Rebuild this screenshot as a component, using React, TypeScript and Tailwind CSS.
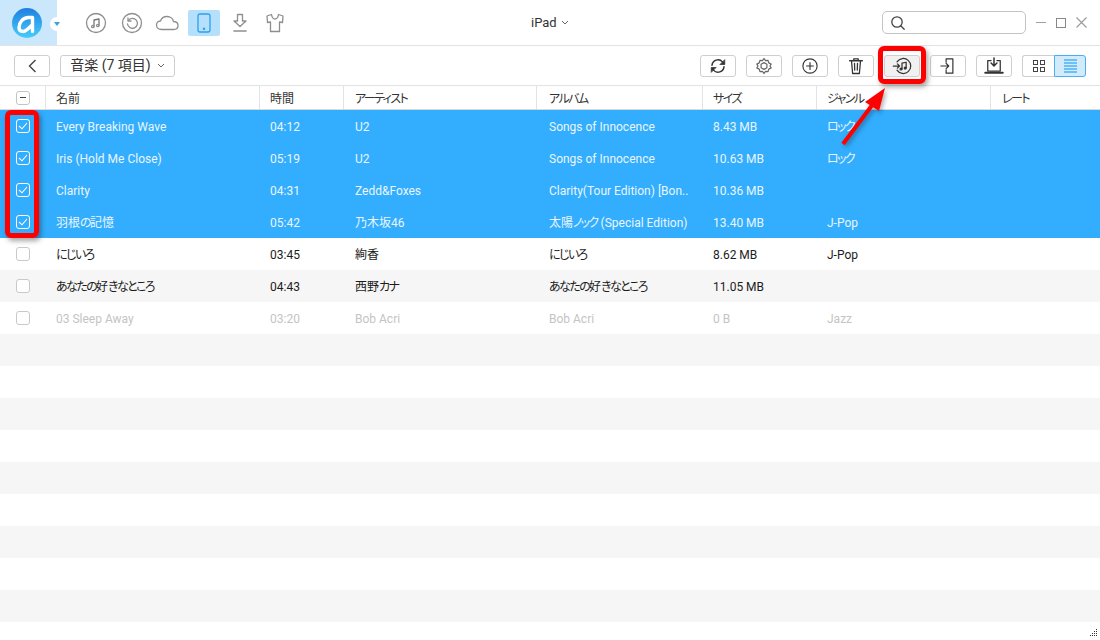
import type { ReactNode } from 'react';

const font = 'font-["Roboto","Noto_Sans_CJK_JP",sans-serif] [font-feature-settings:"palt"]';

interface Track {
  name: string;
  time: string;
  artist: string;
  album: string;
  size: string;
  genre: string;
}

const tracks: Track[] = [
  { name: 'Every Breaking Wave', time: '04:12', artist: 'U2', album: 'Songs of Innocence', size: '8.43 MB', genre: 'ロック' },
  { name: 'Iris (Hold Me Close)', time: '05:19', artist: 'U2', album: 'Songs of Innocence', size: '10.63 MB', genre: 'ロック' },
  { name: 'Clarity', time: '04:31', artist: 'Zedd&Foxes', album: 'Clarity(Tour Edition) [Bon..', size: '10.36 MB', genre: '' },
  { name: '羽根の記憶', time: '05:42', artist: '乃木坂46', album: '太陽ノック (Special Edition)', size: '13.40 MB', genre: 'J-Pop' },
  { name: 'にじいろ', time: '03:45', artist: '絢香', album: 'にじいろ', size: '8.62 MB', genre: 'J-Pop' },
  { name: 'あなたの好きなところ', time: '04:43', artist: '西野カナ', album: 'あなたの好きなところ', size: '11.05 MB', genre: '' },
  { name: '03 Sleep Away', time: '03:20', artist: 'Bob Acri', album: 'Bob Acri', size: '0 B', genre: 'Jazz' },
];

const columns = 'grid grid-cols-[46px_214px_84px_193px_166px_114px_174px_1fr]';
const cellPadding = ['pl-[10px]', 'pl-[10px]', 'pl-[11px]', 'pl-[12px]', 'pl-[10px]', 'pl-[10px]', 'pl-[11px]'];

// kana in the reference is set much narrower than the CJK fallback draws it
function JpText({ text }: { text: string }) {
  const runs = text.split(/([\u3041-\u30ff]+)/);
  return (
    <span>
      {runs.map((run, i) => (
        <span key={i} className={i % 2 === 1 ? 'tracking-[-1.6px]' : ''}>
          {run}
        </span>
      ))}
    </span>
  );
}

function Svg({ children, size = 24, box = 24 }: { children: ReactNode; size?: number; box?: number }) {
  return (
    <svg width={size} height={size} viewBox={`0 0 ${box} ${box}`} fill="none" stroke="currentColor" strokeWidth="1.3" strokeLinecap="round" strokeLinejoin="round">
      {children}
    </svg>
  );
}

function Logo() {
  return (
    <div className="relative w-[57px] h-full bg-[#cbe7fb] flex items-center pl-[12px] shrink-0">
      <svg width="30" height="30" viewBox="0 0 30 30">
        <defs>
          <linearGradient id="logo" x1="0" y1="0" x2="0" y2="1">
            <stop offset="0" stopColor="#1f7fe0" />
            <stop offset="1" stopColor="#45cdfb" />
          </linearGradient>
        </defs>
        <circle cx="15" cy="15" r="15" fill="url(#logo)" />
        <path d="M20.500 23.500V9.500H16.500C11 9.500 7 14.500 7 19.500C7 22 8.500 23.500 11 23.500C14 23.500 16.500 20.500 20.500 16.500" fill="none" stroke="#fff" strokeWidth="3.400" strokeLinecap="round" strokeLinejoin="round" />
      </svg>
      <div className="absolute left-[50px] top-[17px] w-[14px] h-[14px] rounded-full bg-white flex items-center justify-center">
        <div className="w-0 h-0 border-x-[3px] border-x-transparent border-t-[4px] border-t-[#3aa0e8]" />
      </div>
    </div>
  );
}

function NavIcons() {
  return (
    <div className="flex items-center ml-[22px] text-[#8e8e8e]">
      <div className="w-[34px] flex justify-center">
        <Svg>
          <circle cx="12" cy="12" r="9.500" />
          <path d="M10 15.500V9l5-1v6.500" className="text-[#777]" />
          <circle cx="8.800" cy="15.500" r="1.200" />
          <circle cx="13.800" cy="14.500" r="1.200" />
        </Svg>
      </div>
      <div className="w-[38px] flex justify-center">
        <Svg>
          <circle cx="12" cy="12" r="9.500" />
          <path d="M8.300 9.500A5 5 0 1 1 7.500 13" />
          <path d="M8 7v3h3" />
        </Svg>
      </div>
      <div className="w-[32px] flex justify-center">
        <Svg>
          <path d="M6.500 18.500C3.500 18.500 1.500 16.500 1.500 14C1.500 11.500 3.500 10 5.500 10C6.500 7 9 5.500 12 5.500C15.500 5.500 18 8 18.500 10.500C21 10.500 23 12 23 14.500C23 17 21 18.500 18.500 18.500Z" />
        </Svg>
      </div>
      <div className="w-[32px] h-[26px] ml-[5px] rounded-[2px] bg-[#b5e0fb] flex items-center justify-center text-[#2f9fee]">
        <Svg>
          <rect x="6" y="3" width="12" height="18" rx="2" />
          <circle cx="12" cy="17.800" r=".6" fill="currentColor" />
        </Svg>
      </div>
      <div className="w-[40px] flex justify-center">
        <Svg>
          <path d="M9.500 3.500h5v6.500h3.500L12 15.500 6 10h3.500z" />
          <path d="M6 20h12" strokeWidth="1.600" />
        </Svg>
      </div>
      <div className="w-[30px] flex justify-center">
        <Svg>
          <path d="M8.500 3.500 4 5l.5 6.500 3-.5v9.500h9V11l3 .5L20 5l-4.500-1.500C15 6.500 13.500 8 12 8S9 6.500 8.500 3.500z" />
        </Svg>
      </div>
    </div>
  );
}

function TitleBar() {
  return (
    <div className="relative h-[46px] flex items-center border-b border-[#e3e3e3]">
      <Logo />
      <NavIcons />
      <div className="absolute left-[531px] top-[14px] text-[13px] leading-[18px] text-[#333] flex items-center gap-[4px]">
        iPad
        <svg width="8" height="6" viewBox="0 0 8 6" fill="none" stroke="#666" strokeWidth="1"><path d="M1 1l3 3 3-3" /></svg>
      </div>
      <div className="ml-auto flex items-center pr-[13px]">
        <div className="w-[144px] h-[23px] rounded-[5px] border border-[#c4c4c4] flex items-center pl-[7px] text-[#444]">
          <svg width="16" height="16" viewBox="0 0 16 16" fill="none" stroke="currentColor" strokeWidth="1.300" strokeLinecap="round">
            <circle cx="7" cy="7" r="5.200" />
            <path d="M11 11l3.200 3.200" />
          </svg>
        </div>
        <div className="w-[10px] h-px bg-[#a0a0a0] ml-[10px]" />
        <div className="w-[10px] h-[10px] border border-[#888] ml-[10px]" />
        <svg className="ml-[10px]" width="11" height="11" viewBox="0 0 11 11" stroke="#999" strokeWidth="1.100"><path d="M.5.500l10 10M10.500.500l-10 10" /></svg>
      </div>
    </div>
  );
}

function ToolButton({ children, muted }: { children: ReactNode; muted?: boolean }) {
  return (
    <button className={`w-[36px] h-[22px] rounded-[3px] border border-[#cfcfcf] flex items-center justify-center text-[#333] ${muted ? 'bg-[#f1f1f1]' : 'bg-white'}`}>
      {children}
    </button>
  );
}

function Toolbar() {
  return (
    <div className="h-[40px] flex items-center pl-[14px] pr-[14px] border-b border-[#e3e3e3]">
      <button className="w-[36px] h-[22px] rounded-[3px] border border-[#cfcfcf] flex items-center justify-center text-[#444]">
        <svg width="9" height="14" viewBox="0 0 9 14" fill="none" stroke="currentColor" strokeWidth="1.400"><path d="M7.500 1L1.500 7l6 6" /></svg>
      </button>
      <button className="ml-[10px] w-[115px] h-[22px] rounded-[3px] border border-[#cfcfcf] flex items-center justify-center gap-[6px] text-[14px] text-[#333]">
        音楽 (7 項目)
        <svg width="8" height="6" viewBox="0 0 8 6" fill="none" stroke="#666" strokeWidth="1"><path d="M1 1l3 3 3-3" /></svg>
      </button>
      <div className="ml-auto flex items-center gap-[10px]">
        <ToolButton>
          <Svg size={18}>
            <path d="M4 11A8 8 0 0 1 18 6.500M20 13A8 8 0 0 1 6 17.500" strokeWidth="2" />
            <path d="M21 4v6h-6zM3 20v-6h6z" fill="currentColor" strokeWidth="1" />
          </Svg>
        </ToolButton>
        <ToolButton>
          <Svg size={18}>
            <path d="M12 2l2 2.800 3.400-.2 1 3.200L21.500 9.500 20 12l1.500 2.500-3.100 1.700-1 3.200-3.400-.2L12 22l-2-2.800-3.400.2-1-3.200L2.500 14.500 4 12 2.500 9.500l3.100-1.700 1-3.200 3.400.2z" stroke="#666" strokeWidth="1.600" />
            <path d="M12 7.500l3.900 2.250v4.500L12 16.500l-3.900-2.250v-4.500z" stroke="#666" strokeWidth="1.600" />
          </Svg>
        </ToolButton>
        <ToolButton>
          <Svg size={18}>
            <circle cx="12" cy="12" r="9.500" strokeWidth="1.500" />
            <path d="M12 7.500v9M7.500 12h9" strokeWidth="1.500" />
          </Svg>
        </ToolButton>
        <ToolButton>
          <Svg size={18}>
            <path d="M3.500 5h17M9 5V2.500h6V5M6 5l1.500 17h9L18 5M10 8.500l.3 9M14 8.500l-.3 9" strokeWidth="1.700" />
          </Svg>
        </ToolButton>
        <ToolButton muted>
          <Svg size={20}>
            <path d="M6 7A9 9 0 1 1 6 17" strokeWidth="1.500" />
            <path d="M1.500 12h7.500M6.500 9.500L9 12 6.500 14.500" strokeWidth="1.500" />
            <path d="M12 15.500V8.500l5-1v7" strokeWidth="1.500" />
            <circle cx="10.800" cy="15.500" r="1.200" fill="currentColor" />
            <circle cx="15.800" cy="14.500" r="1.200" fill="currentColor" />
          </Svg>
        </ToolButton>
        <ToolButton>
          <Svg size={18}>
            <path d="M9.500 7V2.500h9v19h-9V17" strokeWidth="1.600" />
            <path d="M2.500 12h10M9.500 8.500l3.500 3.500-3.500 3.500" strokeWidth="1.600" />
          </Svg>
        </ToolButton>
        <ToolButton>
          <Svg size={20}>
            <path d="M8.500 5.500H4.500V18h15V5.500h-4" strokeWidth="1.500" />
            <path d="M1.500 20h21" strokeWidth="2.400" />
            <path d="M12 2.500v9M8.500 8.500l3.500 3.500 3.500-3.500" strokeWidth="1.800" />
          </Svg>
        </ToolButton>
        <div className="flex">
          <button className="w-[32px] h-[22px] rounded-l-[3px] border border-[#cfcfcf] border-r-0 flex items-center justify-center">
            <div className="grid grid-cols-2 gap-[2px]">
              <div className="w-[5px] h-[5px] border border-[#444]" />
              <div className="w-[5px] h-[5px] border border-[#444]" />
              <div className="w-[5px] h-[5px] border border-[#444]" />
              <div className="w-[5px] h-[5px] border border-[#444]" />
            </div>
          </button>
          <button className="w-[32px] h-[22px] rounded-r-[3px] border border-[#4aaef3] bg-[#d2ebfb] flex flex-col items-center justify-center gap-px">
            <div className="w-[13px] h-[2px] bg-[#6cc0f6]" />
            <div className="w-[13px] h-[2px] bg-[#6cc0f6]" />
            <div className="w-[13px] h-[2px] bg-[#6cc0f6]" />
            <div className="w-[13px] h-[2px] bg-[#6cc0f6]" />
            <div className="w-[13px] h-[2px] bg-[#6cc0f6]" />
          </button>
        </div>
      </div>
    </div>
  );
}

function Checkbox({ checked }: { checked?: boolean }) {
  return (
    <div className={`w-[14px] h-[14px] rounded-[3px] border flex items-center justify-center ${checked ? 'border-white' : 'border-[#c9c9c9] bg-white'}`}>
      {checked && (
        <svg width="10" height="8" viewBox="0 0 10 8" fill="none" stroke="#fff" strokeWidth="1.100"><path d="M1 4l3 2.800L9 1" /></svg>
      )}
    </div>
  );
}

function HeaderRow() {
  const labels = ['名前', '時間', 'アーティスト', 'アルバム', 'サイズ', 'ジャンル', 'レート'];
  return (
    <div className={`${columns} h-[24px] border-b border-[#d9d9d9] text-[12px] text-[#333]`}>
      <div className="border-r border-[#e3e3e3] flex items-center pl-[16px]">
        <div className="w-[14px] h-[14px] rounded-[3px] border border-[#c4c4c4] flex items-center justify-center">
          <div className="w-[6px] h-px bg-[#444]" />
        </div>
      </div>
      {labels.map((label, i) => (
        <div key={label} className={`flex items-center pt-[3px] ${cellPadding[i]} ${i < 6 ? 'border-r border-[#e3e3e3]' : ''}`}>
          <JpText text={label} />
        </div>
      ))}
    </div>
  );
}

function TrackRow({ track, index }: { track: Track; index: number }) {
  const selected = index < 4;
  const disabled = index === 6;
  const tone = selected
    ? 'bg-[#33adfd] text-[#e9f6ff]'
    : disabled
      ? 'bg-white text-[#c4c4c4]'
      : index === 5
        ? 'bg-[#f6f6f6] text-[#1c1c1c]'
        : 'bg-white text-[#1c1c1c]';
  const cells = [track.name, track.time, track.artist, track.album, track.size, track.genre, ''];
  return (
    <div className={`${columns} h-[32px] text-[12px] ${tone}`}>
      <div className="flex items-center pl-[16px]">
        <Checkbox checked={selected} />
      </div>
      {cells.map((cell, i) => (
        <div key={i} className={`flex items-center pt-[1px] whitespace-pre overflow-hidden ${cellPadding[i]}`}>
          <JpText text={cell} />
        </div>
      ))}
    </div>
  );
}

export default function App() {
  const fillers = Array.from({ length: 9 }, (_, i) => i);
  return (
    <div className={`relative w-[1100px] h-[640px] overflow-hidden bg-white ${font}`}>
      <TitleBar />
      <Toolbar />
      <HeaderRow />
      {tracks.map((track, i) => (
        <TrackRow key={track.name} track={track} index={i} />
      ))}
      {fillers.map((i) => (
        <div key={i} className={`h-[32px] ${i % 2 === 0 ? 'bg-[#f6f6f6]' : 'bg-white'}`} />
      ))}
      {/* annotations drawn on top of the screenshot */}
      <div className="absolute left-[5px] top-[110px] w-[34px] h-[128px] rounded-[6px] border-[5px] border-[#fe0000] shadow-[2px_3px_5px_rgba(0,0,0,0.35)]" />
      <div className="absolute left-[878px] top-[46px] w-[48px] h-[38px] rounded-[6px] border-[5px] border-[#fe0000] shadow-[2px_3px_5px_rgba(0,0,0,0.35)]" />
      <svg className="absolute left-[835px] top-[82px] drop-shadow-[2px_2px_2px_rgba(0,0,0,0.3)]" width="60" height="70" viewBox="0 0 60 70">
        <path d="M8 62L38 22" stroke="#fe0000" strokeWidth="4" />
        <path d="M50 6L30 20L44 29Z" fill="#fe0000" />
      </svg>
      <svg className="absolute right-[2px] bottom-[2px]" width="9" height="9" viewBox="0 0 9 9" fill="#333">
        <rect x="7" y="0" width="1" height="1" />
        <rect x="5" y="2" width="1" height="1" />
        <rect x="7" y="2" width="1" height="1" />
        <rect x="3" y="4" width="1" height="1" />
        <rect x="5" y="4" width="1" height="1" />
        <rect x="7" y="4" width="1" height="1" />
        <rect x="1" y="6" width="1" height="1" />
        <rect x="3" y="6" width="1" height="1" />
        <rect x="5" y="6" width="1" height="1" />
        <rect x="7" y="6" width="1" height="1" />
      </svg>
    </div>
  );
}
